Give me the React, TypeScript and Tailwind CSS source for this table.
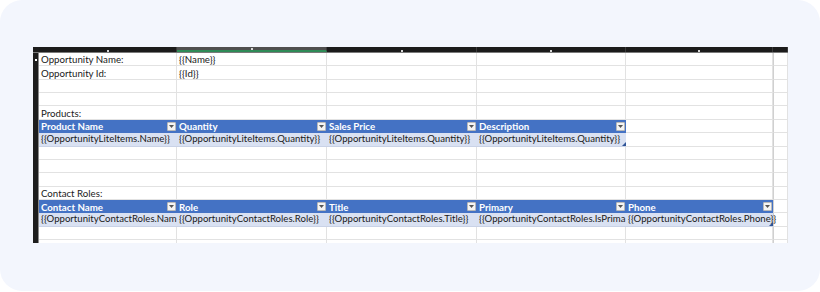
import React from 'react';

type Row =
  | { kind: 'text'; cells: string[] }
  | { kind: 'header'; cells: string[] }
  | { kind: 'data'; cells: string[] }
  | { kind: 'empty' };

const colWidths = [138, 150, 150, 149, 147, 15];

const rows: Row[] = [
  { kind: 'text', cells: ['Opportunity Name:', '{{Name}}'] },
  { kind: 'text', cells: ['Opportunity Id:', '{{Id}}'] },
  { kind: 'empty' },
  { kind: 'empty' },
  { kind: 'text', cells: ['Products:'] },
  { kind: 'header', cells: ['Product Name', 'Quantity', 'Sales Price', 'Description'] },
  {
    kind: 'data',
    cells: [
      '{{OpportunityLiteItems.Name}}',
      '{{OpportunityLiteItems.Quantity}}',
      '{{OpportunityLiteItems.Quantity}}',
      '{{OpportunityLiteItems.Quantity}}',
    ],
  },
  { kind: 'empty' },
  { kind: 'empty' },
  { kind: 'empty' },
  { kind: 'text', cells: ['Contact Roles:'] },
  { kind: 'header', cells: ['Contact Name', 'Role', 'Title', 'Primary', 'Phone'] },
  {
    kind: 'data',
    // cells are clipped in the sheet, keep what is visible
    cells: [
      '{{OpportunityContactRoles.Nam',
      '{{OpportunityContactRoles.Role}}',
      '{{OpportunityContactRoles.Title}}',
      '{{OpportunityContactRoles.IsPrima',
      '{{OpportunityContactRoles.Phone}}',
    ],
  },
  { kind: 'empty' },
  { kind: 'empty' },
];

const FilterButton = () => (
  <div className="ml-auto mr-[1px] flex h-[9px] w-[9px] shrink-0 items-center justify-center rounded-[1px] border border-[#b9b9b9] bg-[#f4f4f4]">
    <svg width="5" height="3" viewBox="0 0 5 3">
      <path d="M0 0 L5 0 L2.5 3 Z" fill="#555" />
    </svg>
  </div>
);

const SheetRow = ({ row, isFirst }: { row: Row; isFirst: boolean }) => {
  const cells = 'cells' in row ? row.cells : [];
  const tableCols = cells.length;

  return (
    <div className="flex h-[13.36px] shrink-0">
      <div className="relative w-[6px] shrink-0 border-r border-[#8a8a8a] bg-[#1d1d1d]">
        {isFirst && <div className="absolute left-[2px] top-[6px] h-[2px] w-[2px] bg-white" />}
      </div>
      {colWidths.map((w, i) => {
        const text = cells[i];
        const isLastCol = i === colWidths.length - 1;
        const inTable = (row.kind === 'header' || row.kind === 'data') && i < tableCols;

        if (row.kind === 'header' && inTable) {
          return (
            <div
              key={i}
              style={{ width: w }}
              className="flex shrink-0 items-center bg-[#4472c4] pl-[2px] text-[9.7px] font-bold leading-[12px] text-white"
            >
              <span className="whitespace-nowrap">{text}</span>
              <FilterButton />
            </div>
          );
        }

        if (row.kind === 'data' && inTable) {
          const last = i === tableCols - 1;
          const overflow = last && i === 4;
          return (
            <div
              key={i}
              style={{ width: w }}
              className={`relative flex shrink-0 items-center border-b border-[#c9d2e6] bg-[#d9e1f2] pl-[2px] text-[9.6px] leading-[12px] text-[#1a1a1a] ${
                overflow ? 'z-10 overflow-visible' : 'overflow-hidden'
              }`}
            >
              <span className="whitespace-nowrap">{text}</span>
              {last && (
                <div className="absolute bottom-0 right-0 h-0 w-0 border-b-[4px] border-l-[4px] border-b-[#2f5597] border-l-transparent" />
              )}
            </div>
          );
        }

        return (
          <div
            key={i}
            style={{ width: w }}
            className={`flex shrink-0 items-center overflow-hidden border-b border-r border-[#e2e2e2] bg-white pl-[2px] text-[9.7px] leading-[12px] text-[#1a1a1a] ${
              isLastCol ? 'border-l border-l-[#d0d0d0]' : ''
            }`}
          >
            {text && <span className="whitespace-nowrap">{text}</span>}
          </div>
        );
      })}
    </div>
  );
};

export default function App() {
  return (
    <div className="h-[292px] w-[820px] bg-white">
      <div
        className="h-[291px] w-[820px] rounded-[22px] bg-[#f3f6fd] pl-[33px] pt-[47px]"
        style={{ fontFamily: 'Lato, "Open Sans", sans-serif' }}
      >
        <div className="flex h-[196px] w-[755px] flex-col overflow-hidden bg-white">
          {/* column header strip */}
          <div className="flex h-[6px] shrink-0 border-b border-[#7a7a7a]">
            <div className="w-[6px] shrink-0 bg-[#1d1d1d]" />
            {colWidths.map((w, i) => (
              <div
                key={i}
                style={{ width: w }}
                className={`relative shrink-0 border-r border-[#3a3a3a] ${
                  i === 1 ? 'border-b-2 border-b-[#2e8b57] bg-[#4f4f4f]' : 'bg-[#1b1b1b]'
                }`}
              >
                {i < 5 && (
                  <div className="absolute bottom-0 left-1/2 h-[2px] w-[2px] -translate-x-1/2 bg-[#d8d8d8]" />
                )}
              </div>
            ))}
          </div>
          {rows.map((row, idx) => (
            <SheetRow key={idx} row={row} isFirst={idx === 0} />
          ))}
        </div>
      </div>
    </div>
  );
}
